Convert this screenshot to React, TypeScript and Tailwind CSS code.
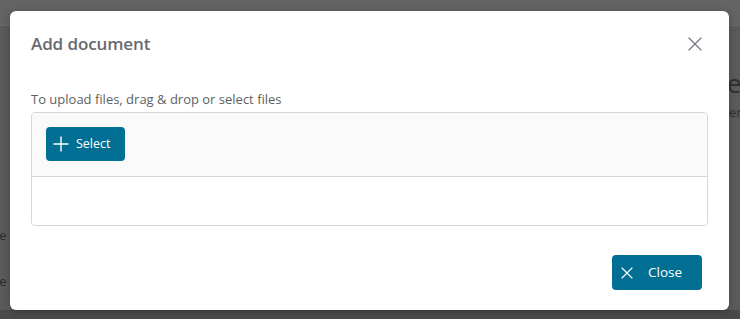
import { Plus, X } from "lucide-react";

function Backdrop() {
  return (
    <div className="h-[319px] w-[740px] bg-[#5b5b5b] flex flex-col">
      <div className="h-[26px] bg-[#646464] border-b border-[#6a6a6a]" />
      <div className="flex flex-1">
        <div className="w-[10px] flex flex-col text-[13px] text-[#2a2a2a] leading-none pt-[203px] gap-[33px]">
          <span className="-ml-[6px]">re</span>
          <span className="-ml-[6px]">re</span>
        </div>
        <div className="flex-1" />
        <div className="w-[11px] flex flex-col text-[#2e2e2e] overflow-hidden">
          <span className="text-[26px] leading-none mt-[44px] -ml-[2px]">e</span>
          <span className="text-[13px] leading-none mt-[10px]">er</span>
        </div>
      </div>
      <div className="h-[9px] bg-[#4a4a4a]" />
    </div>
  );
}

export default function App() {
  return (
    <div
      className="relative h-[319px] w-[740px] overflow-hidden"
      style={{ fontFamily: '"Open Sans", "Noto Sans", sans-serif' }}
    >
      <Backdrop />

      {/* Modal */}
      <div className="absolute left-[10px] top-[11px] w-[719px] h-[299px] bg-white rounded-md shadow-[0_2px_8px_rgba(0,0,0,0.25)] flex flex-col px-[21px]">
        {/* Header */}
        <div className="flex items-center justify-between h-[67px] pb-[2px]">
          <h2 className="text-[17px] font-semibold text-[#666a70] tracking-[-0.1px]">
            Add document
          </h2>
          <button className="mr-[1px] text-[#75797f]">
            <X size={24} strokeWidth={1.2} />
          </button>
        </div>

        {/* Body */}
        <p className="mt-[12px] text-[13px] text-[#5c5f63] leading-[18px]">
          To upload files, drag &amp; drop or select files
        </p>
        <div className="mt-[4px] border border-[#d5d6d8] rounded-[4px] overflow-hidden">
          <div className="bg-[#fafafa] h-[64px] border-b border-[#d5d6d8] px-[14px] pt-[14px]">
            <button className="flex items-center gap-[3px] h-[34px] w-[79px] pl-[3px] rounded-[4px] bg-[#006f93] text-white text-[12.5px]">
              <Plus size={24} strokeWidth={1.4} />
              <span>Select</span>
            </button>
          </div>
          <div className="h-[48px] bg-white" />
        </div>

        {/* Footer */}
        <div className="flex justify-end mt-[29px] mr-[6px]">
          <button className="flex items-center h-[35px] w-[90px] pl-[5px] gap-[11px] rounded-[4px] bg-[#006f93] text-white text-[13.5px]">
            <X size={20} strokeWidth={1.4} />
            <span>Close</span>
          </button>
        </div>
      </div>
    </div>
  );
}
